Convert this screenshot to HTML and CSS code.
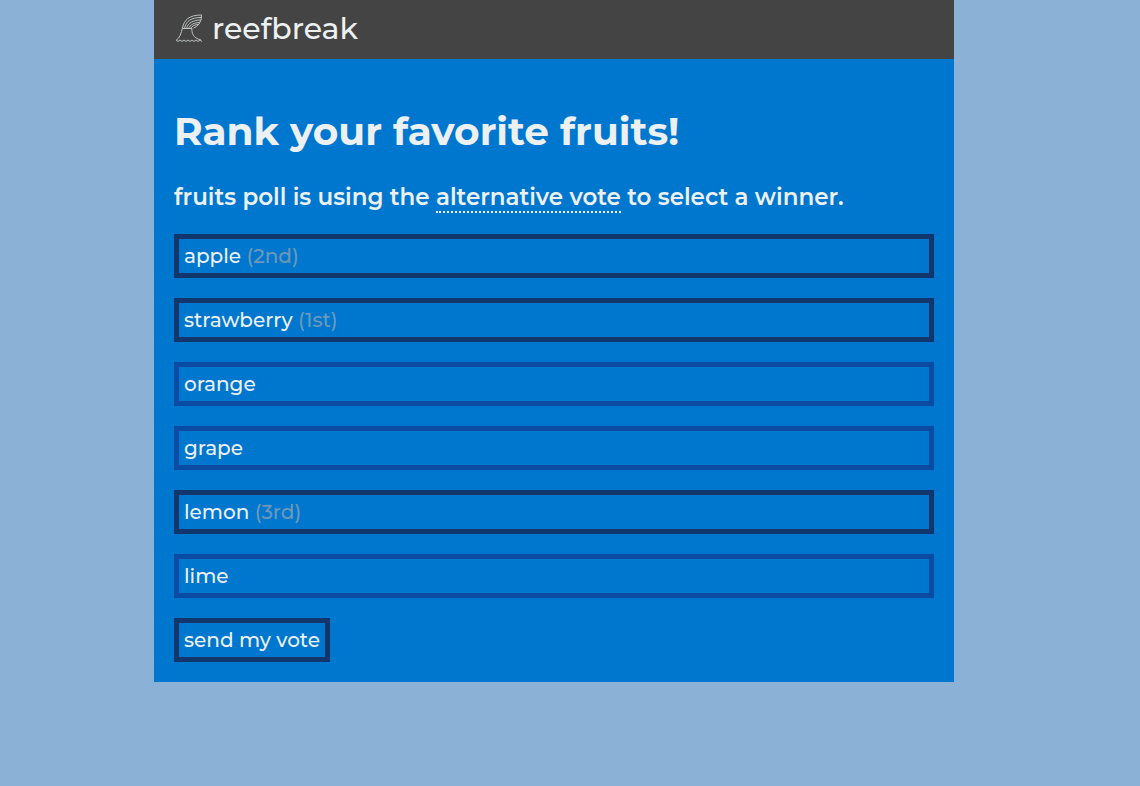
FILE: index.html
```html
<!DOCTYPE html>
<html lang="en">
<head>
<meta charset="utf-8">
<meta name="viewport" content="width=device-width, initial-scale=1">
<title>reefbreak</title>
<link rel="stylesheet" href="styles.css">
</head>
<body>
<div class="page">
  <header class="site-header">
    <a class="brand" href="#">
      <svg class="brand-icon" viewBox="-1 0 30 30" aria-hidden="true">
        <path d="M1 26.500C5 24 6 19 7.500 14C9 6 14 1 26.500 1Q27 6 24 10Q22 13 18.500 14"/>
        <path d="M9.500 14.500C11 7 16 3.500 26.500 3.500M11.500 14.500C13 9 18 6 26 6M13.500 14.500C15 11 19 8.500 25 8.500M15.500 14.500C17 12 20 10.500 23.500 10.500"/>
        <path d="M7.500 14.500H17C16.500 19 18 24 26 26"/>
        <path d="M1 26Q3 29 5 26Q7 29 9 26Q11 29 13 26Q15 29 17 26Q19 29 21 26Q23 29 25 26L27 27.500"/>
      </svg>
      <span>reefbreak</span>
    </a>
  </header>
  <main class="poll">
    <h1 class="poll-title">Rank your favorite fruits!</h1>
    <h2 class="poll-note">fruits poll is using the <a class="term" href="#">alternative vote</a> to select a winner.</h2>
    <form class="ballot">
      <button class="choice ranked" type="button">apple <span class="rank">(2nd)</span></button>
      <button class="choice ranked" type="button">strawberry <span class="rank">(1st)</span></button>
      <button class="choice" type="button">orange</button>
      <button class="choice" type="button">grape</button>
      <button class="choice ranked" type="button">lemon <span class="rank">(3rd)</span></button>
      <button class="choice" type="button">lime</button>
      <button class="choice submit" type="submit">send my vote</button>
    </form>
  </main>
</div>
</body>
</html>
```
FILE: styles.css
```css
* { box-sizing: border-box; }

body {
  margin: 0;
  padding-right: 32px;
  background: #8cb1d7;
  color: #ecf0f1;
  font-family: Montserrat, Inter, sans-serif;
  font-weight: 500;
}

.page {
  max-width: 800px;
  margin: 0 auto;
  background: #0077cf;
}

.site-header {
  padding: 9px 20px 10px;
  background: #444;
}

.brand {
  display: flex;
  align-items: center;
  gap: 8px;
  color: inherit;
  font-size: 30px;
  line-height: 40px;
  text-decoration: none;
}

.brand-icon {
  width: 30px;
  height: 30px;
  fill: none;
  stroke: #bec2c3;
  stroke-width: 1;
}

.poll { padding: 48px 20px 20px; }

.poll-title {
  margin: 0 0 24px;
  font-size: 39px;
  line-height: 48px;
  font-weight: 700;
}

.poll-note {
  margin: 0 0 19px;
  font-size: 23px;
  line-height: 36px;
  font-weight: 600;
}

.term {
  border-bottom: 2px dotted #ecf0f1;
  color: inherit;
  text-decoration: none;
}

.ballot {
  display: flex;
  flex-direction: column;
  gap: 20px;
}

.choice {
  padding: 5px;
  border: 5px solid #0c4ba3;
  background: none;
  color: inherit;
  font-family: inherit;
  font-size: 20px;
  font-weight: inherit;
  line-height: 24px;
  text-align: left;
  cursor: pointer;
}

.ranked,
.submit { border-color: #10366c; }

.submit { align-self: flex-start; }

.rank { color: #6e98b8; }
```
